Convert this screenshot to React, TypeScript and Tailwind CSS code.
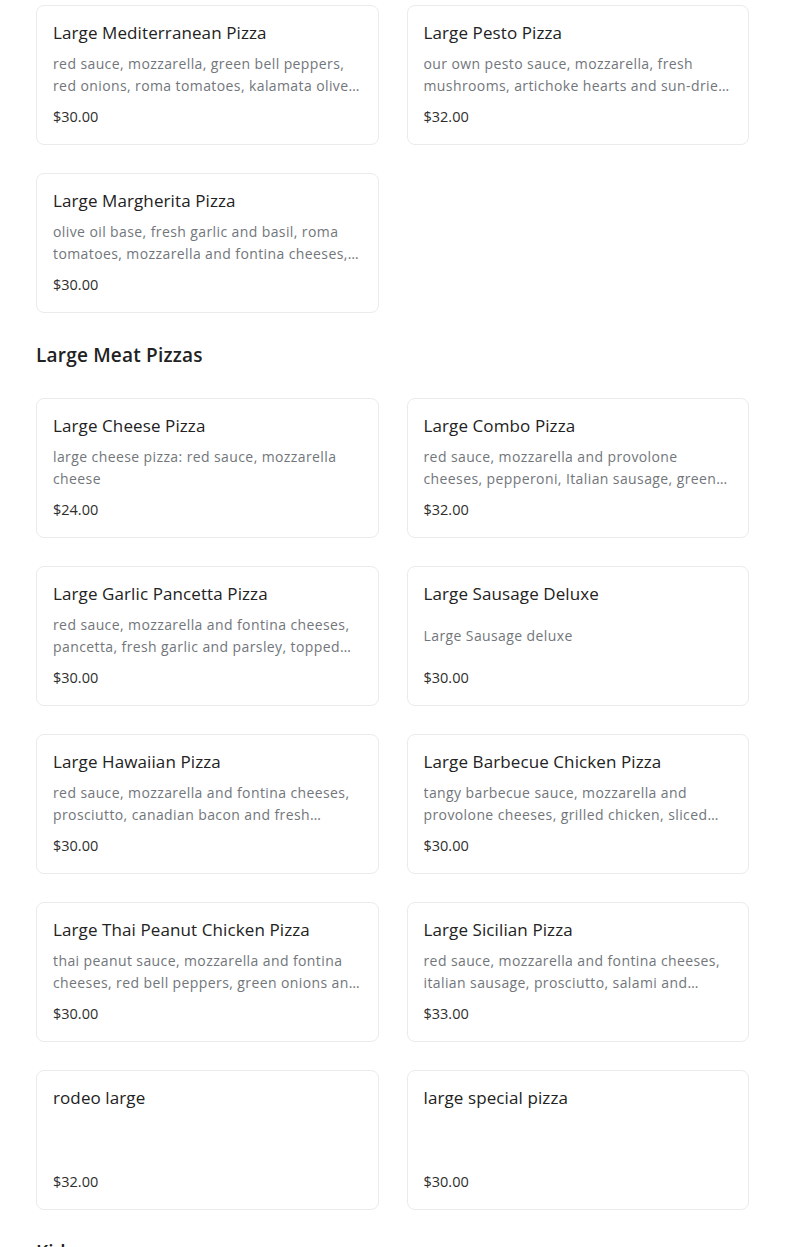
const items1 = [
  {
    name: "Large Mediterranean Pizza",
    desc: "red sauce, mozzarella, green bell peppers, red onions, roma tomatoes, kalamata olives, feta cheese and fresh basil",
    price: "$30.00",
  },
  {
    name: "Large Pesto Pizza",
    desc: "our own pesto sauce, mozzarella, fresh mushrooms, artichoke hearts and sun-dried tomatoes",
    price: "$32.00",
  },
  {
    name: "Large Margherita Pizza",
    desc: "olive oil base, fresh garlic and basil, roma tomatoes, mozzarella and fontina cheeses, topped with parmesan",
    price: "$30.00",
  },
];

const meat = [
  {
    name: "Large Cheese Pizza",
    desc: "large cheese pizza: red sauce, mozzarella cheese",
    price: "$24.00",
  },
  {
    name: "Large Combo Pizza",
    desc: "red sauce, mozzarella and provolone cheeses, pepperoni, Italian sausage, green bell peppers, mushrooms and red onions",
    price: "$32.00",
  },
  {
    name: "Large Garlic Pancetta Pizza",
    desc: "red sauce, mozzarella and fontina cheeses, pancetta, fresh garlic and parsley, topped with parmesan",
    price: "$30.00",
  },
  { name: "Large Sausage Deluxe", desc: "Large Sausage deluxe", price: "$30.00" },
  {
    name: "Large Hawaiian Pizza",
    desc: "red sauce, mozzarella and fontina cheeses, prosciutto, canadian bacon and fresh pineapple",
    price: "$30.00",
  },
  {
    name: "Large Barbecue Chicken Pizza",
    desc: "tangy barbecue sauce, mozzarella and provolone cheeses, grilled chicken, sliced red onions and cilantro",
    price: "$30.00",
  },
  {
    name: "Large Thai Peanut Chicken Pizza",
    desc: "thai peanut sauce, mozzarella and fontina cheeses, red bell peppers, green onions and cilantro",
    price: "$30.00",
  },
  {
    name: "Large Sicilian Pizza",
    desc: "red sauce, mozzarella and fontina cheeses, italian sausage, prosciutto, salami and pepperoncini",
    price: "$33.00",
  },
  { name: "rodeo large", desc: "", price: "$32.00" },
  { name: "large special pizza", desc: "", price: "$30.00" },
];

type Item = { name: string; desc: string; price: string };

function MenuCard({ item }: { item: Item }) {
  return (
    <div className="h-[140px] rounded-lg border border-[#ebebeb] bg-white px-4 pt-[15px]">
      <h3 className="text-[17px] leading-6 font-medium tracking-[0.1px] text-[#222]">{item.name}</h3>
      <div className="mt-[8px] flex h-[44px] items-center">
        <p className="line-clamp-2 text-[14px] leading-[22px] tracking-[0.4px] text-[#72767b]">{item.desc}</p>
      </div>
      <p className="mt-[9px] text-[14.5px] leading-[22px] text-[#2e2e2e]">{item.price}</p>
    </div>
  );
}

function Grid({ items }: { items: Item[] }) {
  return (
    <div className="grid grid-cols-2 gap-7">
      {items.map((it) => (
        <MenuCard key={it.name} item={it} />
      ))}
    </div>
  );
}

function Heading({ children }: { children: string }) {
  return (
    <h2 className="pt-[28px] pb-[29px] text-[19px] leading-7 font-semibold tracking-[0.2px] text-[#222]">
      {children}
    </h2>
  );
}

export default function App() {
  return (
    <div className="min-h-screen bg-white px-9 pt-[5px] font-['Open_Sans',sans-serif]">
      <Grid items={items1} />
      <Heading>Large Meat Pizzas</Heading>
      <Grid items={meat} />
      <Heading>Kids</Heading>
    </div>
  );
}
